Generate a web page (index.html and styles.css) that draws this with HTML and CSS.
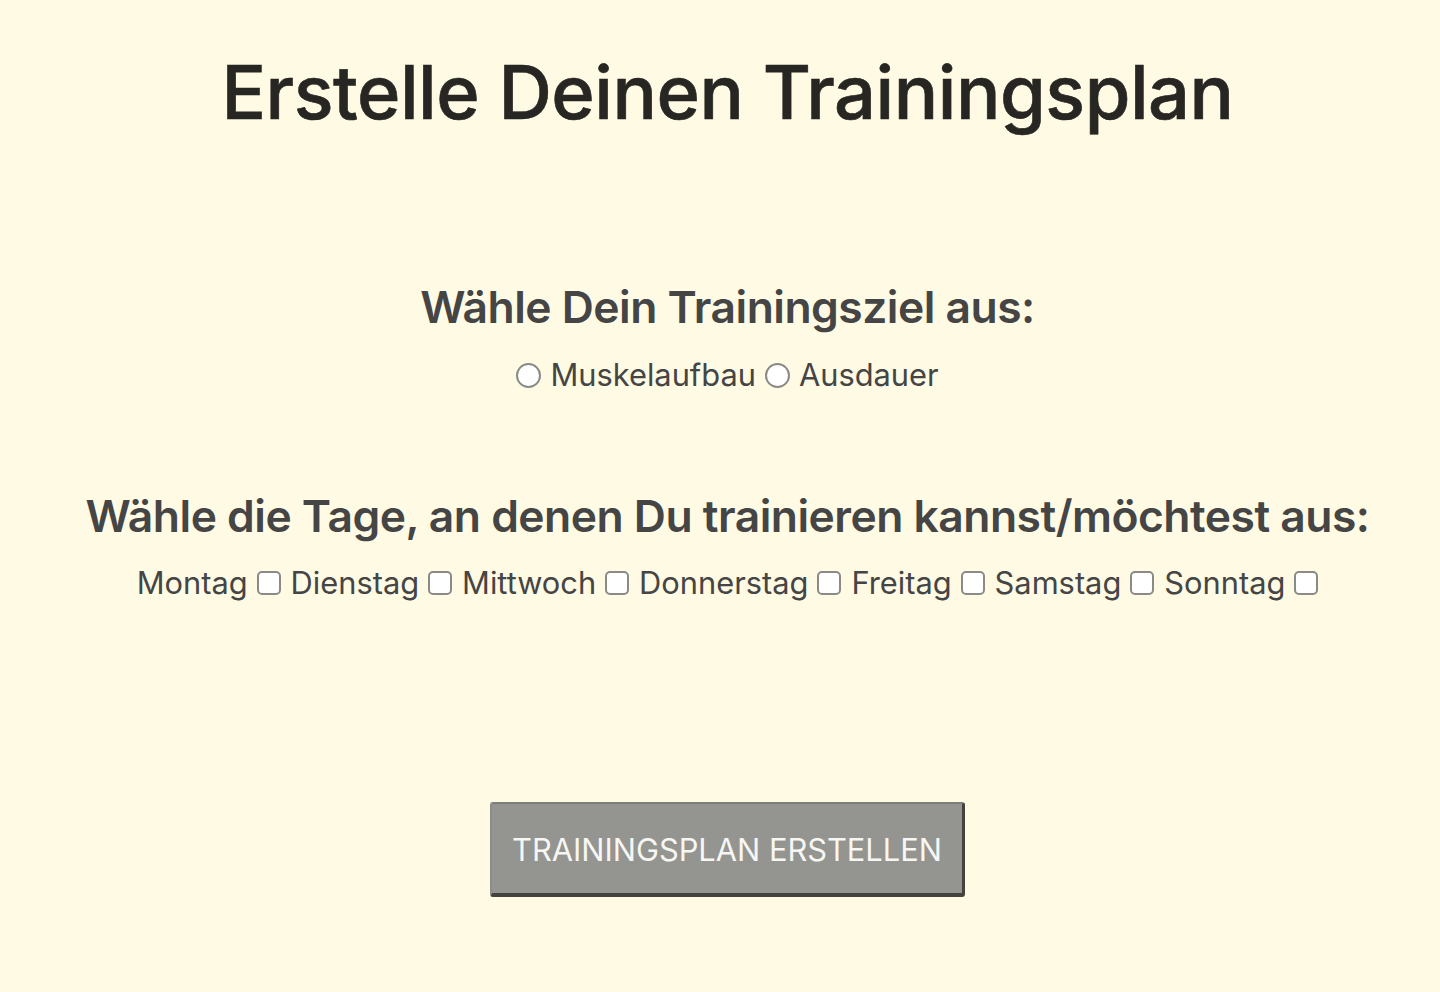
FILE: index.html
```html
<!DOCTYPE html>
<html lang="de">
<head>
<meta charset="utf-8">
<title>Trainingsplan</title>
<link rel="stylesheet" href="styles.css">
</head>
<body>
<main class="page">
  <h1 class="title">Erstelle Deinen Trainingsplan</h1>
  <section class="group goal">
    <h2 class="group-title">Wähle Dein Trainingsziel aus:</h2>
    <div class="options">
      <label class="opt"><input type="radio" name="ziel" class="radio"> Muskelaufbau</label>
      <label class="opt"><input type="radio" name="ziel" class="radio"> Ausdauer</label>
    </div>
  </section>
  <section class="group days">
    <h2 class="group-title">Wähle die Tage, an denen Du trainieren kannst/möchtest aus:</h2>
    <div class="options">
      <label class="opt">Montag <input type="checkbox" class="check"></label>
      <label class="opt">Dienstag <input type="checkbox" class="check"></label>
      <label class="opt">Mittwoch <input type="checkbox" class="check"></label>
      <label class="opt">Donnerstag <input type="checkbox" class="check"></label>
      <label class="opt">Freitag <input type="checkbox" class="check"></label>
      <label class="opt">Samstag <input type="checkbox" class="check"></label>
      <label class="opt">Sonntag <input type="checkbox" class="check"></label>
    </div>
  </section>
  <div class="actions">
    <button type="button" class="btn">Trainingsplan erstellen</button>
  </div>
</main>
</body>
</html>
```
FILE: styles.css
```css
html, body {
  margin: 0;
  padding: 0;
  background: #fffae4;
}
body {
  font-family: Inter, "Noto Sans", sans-serif;
  color: #444544;
  height: 992px;
  overflow: hidden;
}
.page {
  display: flex;
  flex-direction: column;
  align-items: center;
  text-align: center;
  padding-left: 15px;
}
.title {
  margin: 48px 0 0;
  font-size: 74px;
  font-weight: 500;
  line-height: 88px;
  color: #272622;
  letter-spacing: -0.5px;
  -webkit-text-stroke: 0.6px #272622;
}
.group-title {
  margin: 0;
  font-size: 44.4px;
  font-weight: 600;
  line-height: 54px;
  color: #444544;
  letter-spacing: -0.5px;
}
.goal {
  margin-top: 144px;
}
.days {
  margin-top: 95px;
}
.options {
  margin-top: 21px;
  font-size: 30.8px;
  line-height: 38px;
  display: flex;
  justify-content: center;
  gap: 9px;
}
.goal .options {
  margin-top: 22px;
}
.days .options {
  gap: 10px;
}
.opt {
  display: inline-flex;
  align-items: center;
  gap: 9px;
}
.radio, .check {
  appearance: none;
  -webkit-appearance: none;
  margin: 0;
  background: #fff;
  border: 2px solid #8a8a86;
  box-sizing: border-box;
}
.radio {
  width: 25px;
  height: 25px;
  border-radius: 50%;
}
.check {
  width: 24px;
  height: 24px;
  border-radius: 5px;
}
.actions {
  margin-top: 200px;
}
.btn {
  font-family: Inter, "Noto Sans", sans-serif;
  text-transform: uppercase;
  font-size: 30.8px;
  color: #f6f6f2;
  background: #949490;
  width: 475px;
  height: 95px;
  border-style: solid;
  border-width: 2px 3px 4px 2px;
  border-color: #7d7d79 #43423d #43423d #8c8c88;
  border-radius: 3px;
  padding: 2px 0 0;
}
```
